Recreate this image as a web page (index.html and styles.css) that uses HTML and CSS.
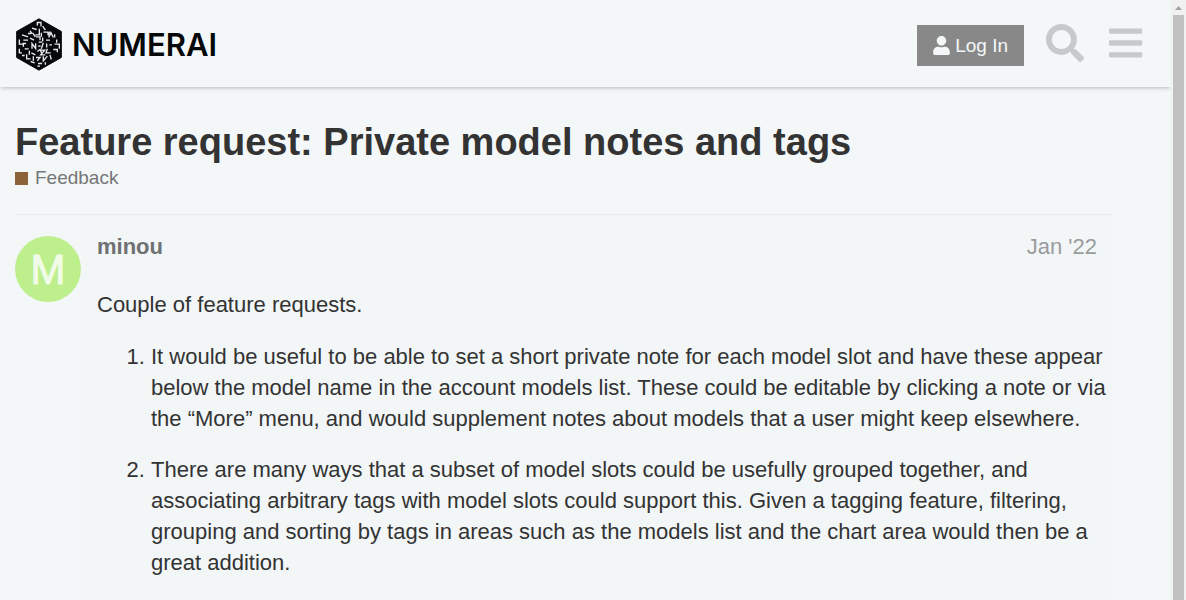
FILE: index.html
```html
<!DOCTYPE html>
<html lang="en">
<head>
<meta charset="utf-8">
<title>Feature request: Private model notes and tags</title>
<link rel="stylesheet" href="styles.css">
</head>
<body>
<div class="window">
  <div class="page">
    <header class="header">
      <a class="brand" href="#">
        <svg class="brand-mark" viewBox="0 0 138 158" aria-hidden="true">
          <path d="M69 2 136 40V118L69 156 2 118V40Z" fill="#06080a" stroke="#06080a" stroke-width="3" stroke-linejoin="round"/>
          <g fill="none" stroke="#e9eced" stroke-width="4">
            <path d="M64 22v-9h11v12M48 30l14 4M80 24l8 12M70 32v18h-12M42 38l6 8M82 42h14v8M18 50l18 6M36 46h10M50 44l8 12M102 40l-6 12M76 56v-12M98 58l7-14 7 14M116 48v10M10 64v14h10M22 66h14M42 60l12 6M60 56h12v10M80 58v12M90 66h12M122 64v10M30 76h-8v10M48 92v-16l11 15v-16M68 72h10M66 84h8M82 74l-6 18M92 76v12M100 80h8M116 78h14v14M10 92v12h8M26 92h12M40 98v12M46 104l12 6M64 100l8-6 5 10M72 96h14l-12 14h14M94 92l-4 12h14M112 94h12v8M18 112h8M32 108v14h12M52 114v14M60 118h12l-8 10M82 114v14l12-14M102 110l4 14M44 130l12 4M66 136h12M88 132v8M64 144h8"/>
          </g>
        </svg>
        <span class="brand-name">NUMERAI</span>
      </a>
      <div class="panel">
        <button class="login" type="button">
          <svg class="login-icon" viewBox="0 0 448 512" aria-hidden="true"><path fill="currentColor" d="M224 256c70.700 0 128-57.300 128-128S294.700 0 224 0 96 57.300 96 128s57.300 128 128 128zm89.600 32h-16.700c-22.200 10.200-46.900 16-72.900 16s-50.600-5.800-72.900-16h-16.700C60.200 288 0 348.200 0 422.400V464c0 26.500 21.500 48 48 48h352c26.500 0 48-21.500 48-48v-41.600c0-74.200-60.200-134.400-134.400-134.400z"/></svg>
          <span>Log In</span>
        </button>
        <button class="icon-button" type="button" aria-label="Search">
          <svg class="icon" viewBox="0 0 512 512" aria-hidden="true"><path fill="currentColor" d="M505 442.700L405.300 343c-4.500-4.500-10.600-7-17-7H372c27.600-35.300 44-79.700 44-128C416 93.100 322.900 0 208 0S0 93.100 0 208s93.100 208 208 208c48.300 0 92.700-16.400 128-44v16.300c0 6.400 2.500 12.500 7 17l99.700 99.700c9.400 9.400 24.600 9.400 33.900 0l28.300-28.300c9.400-9.400 9.400-24.600.1-34zM208 336c-70.700 0-128-57.200-128-128 0-70.700 57.200-128 128-128 70.700 0 128 57.200 128 128 0 70.700-57.200 128-128 128z"/></svg>
        </button>
        <button class="icon-button" type="button" aria-label="Menu">
          <svg class="icon" viewBox="-40 0 512 512" aria-hidden="true"><path fill="currentColor" d="M16 132h416c8.800 0 16-7.200 16-16V76c0-8.800-7.200-16-16-16H16C7.200 60 0 67.200 0 76v40c0 8.800 7.200 16 16 16zm0 160h416c8.800 0 16-7.200 16-16v-40c0-8.800-7.200-16-16-16H16c-8.800 0-16 7.200-16 16v40c0 8.800 7.200 16 16 16zm0 160h416c8.800 0 16-7.200 16-16v-40c0-8.800-7.200-16-16-16H16c-8.800 0-16 7.200-16 16v40c0 8.800 7.200 16 16 16z"/></svg>
        </button>
      </div>
    </header>
    <main class="topic">
      <h1 class="title">Feature request: Private model notes and tags</h1>
      <a class="category" href="#"><span class="swatch"></span>Feedback</a>
      <article class="post">
        <svg class="avatar" viewBox="0 0 66 66" role="img" aria-label="minou">
          <circle cx="33" cy="33" r="33" fill="#bdef8d"/>
          <text class="avatar-letter" x="33" y="48" text-anchor="middle">M</text>
        </svg>
        <div class="post-body">
          <div class="meta"><a class="author" href="#">minou</a><a class="date" href="#">Jan '22</a></div>
          <div class="cooked">
            <p>Couple of feature requests.</p>
            <ol>
              <li>It would be useful to be able to set a short private note for each model slot and have these appear below the model name in the account models list. These could be editable by clicking a note or via the “More” menu, and would supplement notes about models that a user might keep elsewhere.</li>
              <li>There are many ways that a subset of model slots could be usefully grouped together, and associating arbitrary tags with model slots could support this. Given a tagging feature, filtering, grouping and sorting by tags in areas such as the models list and the chart area would then be a great addition.</li>
            </ol>
          </div>
        </div>
      </article>
    </main>
  </div>
  <div class="scrollbar" aria-hidden="true">
    <svg class="scroll-arrow" viewBox="0 0 15 15"><path d="M4 10 7.500 6 11 10Z" fill="#a3a3a3"/></svg>
    <div class="thumb"></div>
  </div>
</div>
</body>
</html>
```
FILE: styles.css
```css
* { box-sizing: border-box; }

body {
  margin: 0;
  background: #f3f7f8;
  color: #333;
  font-family: "Liberation Sans", Arial, sans-serif;
  font-size: 22px;
  line-height: 31px;
}

a { color: inherit; text-decoration: none; }
button { border: 0; padding: 0; background: none; font: inherit; cursor: pointer; }
svg { display: block; flex: none; }

.window { display: flex; height: 100vh; overflow: hidden; }
.page { flex: 1; min-width: 0; overflow: hidden; }

.header {
  display: flex;
  align-items: center;
  justify-content: space-between;
  padding: 18px 27px 16px 16px;
  box-shadow: 0 2px 4px -1px rgba(0, 0, 0, 0.25);
}
.brand { display: flex; align-items: center; gap: 10px; color: #06080a; }
.brand-mark { width: 46px; height: 53px; }
.brand-name { font-family: Inter, sans-serif; font-size: 31px; font-weight: 600; }

.panel { display: flex; align-items: flex-start; gap: 22px; padding-top: 1px; }
.login {
  display: flex;
  align-items: center;
  gap: 5px;
  margin-top: 1px;
  padding: 5px 16px;
  background: #888;
  color: #f3f7f8;
  font-size: 19px;
}
.login-icon { width: 17px; height: 19px; }
.icon-button { color: #c7c9ca; }
.icon { width: 38px; height: 38px; }

.topic { max-width: 1112px; padding: 32px 0 0 15px; }
.title { margin: 0; font-size: 38px; line-height: 46px; }
.category {
  display: flex;
  align-items: center;
  gap: 7px;
  color: #757677;
  font-size: 19px;
  line-height: 26px;
}
.swatch { width: 13px; height: 13px; background: #8c6238; }

.post { display: flex; margin-top: 23px; border-top: 1px solid #e7eaeb; }
.avatar { width: 66px; height: 66px; margin-top: 21px; }
.avatar-letter {
  font-family: "Liberation Sans", Arial, sans-serif;
  font-size: 42px;
  fill: #f1fbe8;
  stroke: #f1fbe8;
  stroke-width: 1px;
}
.post-body { flex: 1; min-width: 0; padding: 16px 4px 0 16px; background: #f2f6f7; }
.meta { display: flex; justify-content: space-between; padding-right: 11px; }
.author { color: #6f7071; font-weight: bold; }
.date { color: #9a9c9d; }
.cooked { padding-top: 27px; }
.cooked p { margin: 0; }
.cooked ol { margin: 21px 0; padding-left: 54px; }
.cooked li { margin-bottom: 20px; }

.scrollbar { flex: none; width: 15px; background: #f1f1f1; display: flex; flex-direction: column; }
.scroll-arrow { width: 15px; height: 15px; }
.thumb { flex: 1; margin: 0 2px; background: #c1c1c1; }
```
